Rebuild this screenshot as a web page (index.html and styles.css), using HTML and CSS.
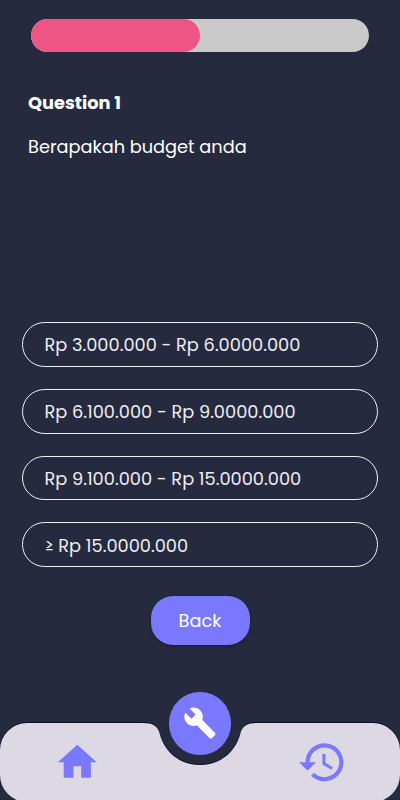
FILE: index.html
```html
<!DOCTYPE html>
<html lang="id">
<head>
<meta charset="utf-8">
<meta name="viewport" content="width=device-width, initial-scale=1">
<title>Question 1</title>
<link rel="stylesheet" href="styles.css">
</head>
<body>
<main class="screen">
  <div class="progress"><div class="progress-fill"></div></div>
  <section class="question">
    <h1 class="title">Question 1</h1>
    <p class="prompt">Berapakah budget anda</p>
  </section>
  <div class="options">
    <button class="option">Rp 3.000.000 - Rp 6.0000.000</button>
    <button class="option">Rp 6.100.000 - Rp 9.0000.000</button>
    <button class="option">Rp 9.100.000 - Rp 15.0000.000</button>
    <button class="option">≥ Rp 15.0000.000</button>
  </div>
  <button class="back">Back</button>
  <nav class="nav">
    <svg class="nav-shape" viewBox="0 0 400 110" aria-hidden="true">
      <path d="M27 33H143C153 33 157.500 36 159.500 43C164 62 180 75 200 75S236 62 240.500 43C242.500 36 247 33 257 33H373A27 27 0 0 1 400 60V85A27 27 0 0 1 373 112H27A27 27 0 0 1 0 85V60A27 27 0 0 1 27 33Z"/>
    </svg>
    <a class="item home" aria-label="Home"><svg viewBox="0 0 24 24"><path d="M10 20v-6h4v6h5v-8h3L12 3 2 12h3v8z"/></svg></a>
    <a class="fab" aria-label="Build"><svg viewBox="0 0 24 24"><path d="M22.700 19l-9.100-9.100c.9-2.300.4-5-1.500-6.900-2-2-5-2.400-7.400-1.300L9 6 6 9 1.600 4.700C.4 7.100.9 10.100 2.900 12.100c1.900 1.900 4.600 2.400 6.900 1.500l9.100 9.100c.4.4 1 .4 1.400 0l2.300-2.300c.5-.4.5-1.100.1-1.400z"/></svg></a>
    <a class="item history" aria-label="History"><svg viewBox="0 0 24 24"><path d="M13 3c-4.970 0-9 4.030-9 9H1l3.890 3.890.07.14L9 12H6c0-3.870 3.130-7 7-7s7 3.130 7 7-3.130 7-7 7c-1.930 0-3.680-.79-4.940-2.060l-1.420 1.420C8.270 19.990 10.510 21 13 21c4.970 0 9-4.030 9-9s-4.030-9-9-9zm-1 5v5l4.280 2.540.72-1.210-3.500-2.080V8H12z"/></svg></a>
  </nav>
</main>
</body>
</html>
```
FILE: styles.css
```css
* { box-sizing: border-box; }
body {
  margin: 0;
  background: #262a3f;
  color: #fff;
  font-family: Poppins, Inter, "Open Sans", sans-serif;
  font-size: 17.750px;
}
.screen {
  height: 800px;
  overflow: hidden;
  display: flex;
  flex-direction: column;
}
.progress {
  flex: none;
  margin: 18.500px 31px 0;
  height: 33.500px;
  border-radius: 17px;
  background: #c9c9c9;
  overflow: hidden;
}
.progress-fill {
  width: 50%;
  height: 100%;
  border-radius: 17px;
  background: #ee5584;
}
.question {
  height: 270px;
  padding: 37px 28px 0;
}
.title, .prompt {
  margin: 0;
  font-size: inherit;
  line-height: 28px;
  white-space: nowrap;
}
.title { font-weight: 700; }
.prompt { margin-top: 16px; }
.options {
  display: flex;
  flex-direction: column;
  gap: 22px;
  padding: 0 22px;
}
button { font: inherit; color: inherit; }
.option {
  height: 44.800px;
  padding: 2px 0 0 21.500px;
  border: 1.300px solid #f0f0f5;
  border-radius: 23px;
  background: none;
  text-align: left;
  line-height: 28px;
  white-space: nowrap;
  color: #eeeef3;
}
.back {
  flex: none;
  align-self: center;
  width: 99px;
  height: 49px;
  margin-top: 28.500px;
  border: 0;
  border-radius: 22px;
  background: #7a78ff;
  box-shadow: 0 1px 3px #0006;
}
.nav {
  position: relative;
  flex: none;
  height: 110px;
  margin-top: auto;
  display: grid;
  grid-template-columns: 155px 90px 155px;
  justify-items: center;
}
.nav-shape {
  position: absolute;
  inset: 0;
  width: 400px;
  height: 110px;
  fill: #dcd9e4;
  filter: drop-shadow(0 -0.500px 0.500px #0b0d20);
}
.item, .fab { position: relative; display: flex; }
.item { align-self: start; margin-top: 48.500px; fill: #7a78ff; }
.home svg { width: 46.600px; height: 46.600px; }
.history { margin-top: 46.500px; }
.history svg { width: 50.700px; height: 50.700px; }
.fab {
  width: 62.500px;
  height: 62.500px;
  margin-top: 2px;
  align-items: center;
  justify-content: center;
  border-radius: 50%;
  background: #7a78ff;
  fill: #fff;
}
.fab svg { width: 34px; height: 34px; }
```
